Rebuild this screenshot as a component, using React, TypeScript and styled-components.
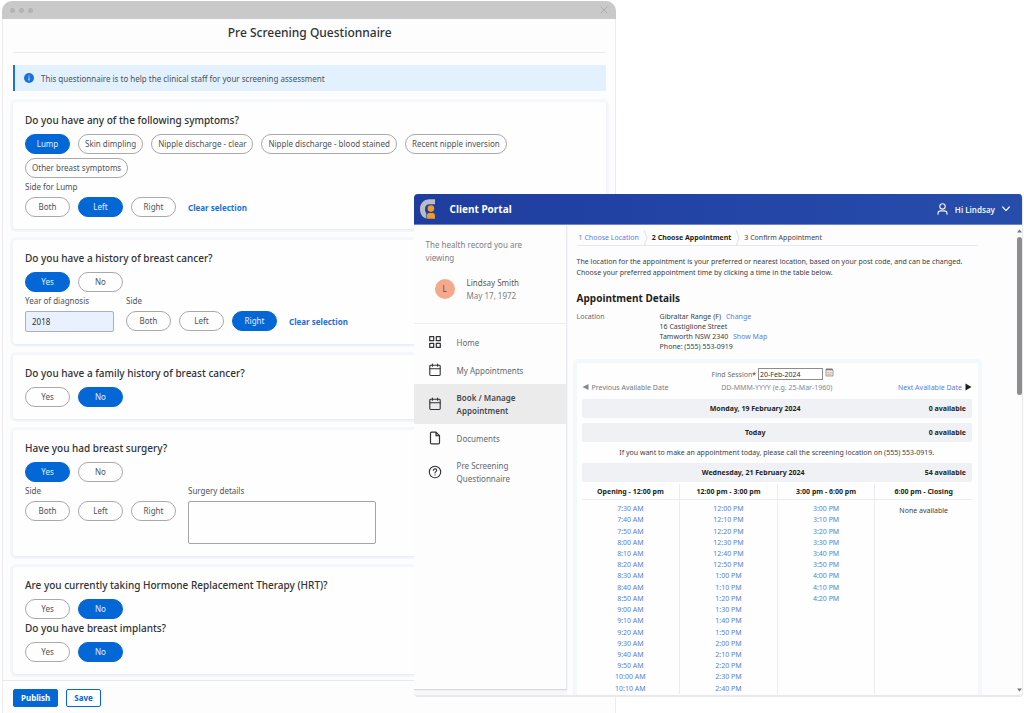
import React, { useState } from "react";
import styled, { createGlobalStyle } from "styled-components";

const GlobalStyle = createGlobalStyle`
  *, *::before, *::after { box-sizing: border-box; }
  body {
    margin: 0;
    background: #ffffff;
    font-family: "Noto Sans", "Open Sans", sans-serif;
    color: #3c4043;
  }
  button, input, textarea { font-family: inherit; margin: 0; }
  h1, h2, h3, p, ul, dl, dd { margin: 0; padding: 0; }
  a { color: #5a7fd6; text-decoration: none; }
`;

/* ---------- Desktop and windows ---------- */

const Desktop = styled.div`
  position: relative;
  min-height: 100vh;
  display: flex;
`;

const FormWindow = styled.section`
  width: 60%;
  margin: 1px 0 0 2px;
  display: flex;
  flex-direction: column;
  background: #fdfdfd;
  border: solid #ececec;
  border-width: 0 1px;
  border-radius: 10px 10px 0 0;
`;

const TitleBar = styled.div`
  height: 18px;
  margin: 0 -1px;
  padding: 0 8px;
  display: flex;
  align-items: center;
  gap: 4px;
  background: #c9c9c9;
  border-radius: 10px 10px 0 0;
`;

const Dot = styled.span`
  width: 5px;
  height: 5px;
  border-radius: 50%;
  background: #b3b3b3;
`;

const CloseButton = styled.button`
  margin-left: auto;
  padding: 0;
  border: 0;
  background: none;
  display: flex;
`;

const FormBody = styled.div`
  flex: 1;
  padding: 0 9px 6px 10px;
`;

const FormTitle = styled.h1`
  height: 34px;
  line-height: 27px;
  border-bottom: 1px solid #ebebee;
  font-size: 12px;
  font-weight: 500;
  text-align: center;
  color: #303236;
`;

const Notice = styled.p`
  margin: 12px 0 11px;
  height: 26px;
  padding-left: 9px;
  display: flex;
  align-items: center;
  gap: 7px;
  border-left: 2px solid #1a73d9;
  background: #e3f1ff;
  font-size: 8px;
  color: #4b5158;
`;

const CardList = styled.div`
  display: flex;
  flex-direction: column;
  gap: 11px;
`;

const Card = styled.section`
  padding: 10px 12px 12px;
  border-radius: 3px;
  background: #fefefe;
  box-shadow: 0 1px 2px #e6e9f0, 0 0 0 3px #f4f8fd;
`;

const Question = styled.h2`
  margin-bottom: 6px;
  line-height: 16px;
  font-size: 10px;
  font-weight: 500;
  color: #303236;

  div + & { margin-top: 1px; }
`;

const PillRow = styled.div`
  display: flex;
  flex-wrap: wrap;
  gap: 4px 8px;
`;

const Pill = styled.button<{ $on?: boolean }>`
  min-width: 45px;
  height: 20px;
  padding: 0 6px;
  border: 1px solid ${(p) => (p.$on ? "#0467d6" : "#a9a9a9")};
  border-radius: 10px;
  background: ${(p) => (p.$on ? "#0467d6" : "#fefefe")};
  color: ${(p) => (p.$on ? "#e2efff" : "#4f5357")};
  font-size: 8px;
  line-height: 12px;
`;

const ClearButton = styled.button`
  margin-left: 4px;
  padding: 0;
  border: 0;
  background: none;
  color: #1a70da;
  font-size: 8px;
  font-weight: 700;
`;

const FieldRow = styled.div`
  display: flex;
  gap: 12px;
  padding-top: 2px;
`;

const Field = styled.div`
  display: flex;
  flex-direction: column;
  gap: 3px;
`;

const FieldLabel = styled.label`
  line-height: 14px;
  font-size: 8px;
  color: #4f5357;
`;

const YearInput = styled.input`
  width: 89px;
  height: 21px;
  padding: 0 6px;
  border: 1px solid #a9b0ba;
  border-radius: 2px;
  background: #e9f1fe;
  font-size: 8px;
  color: #303236;
`;

const DetailsBox = styled.textarea`
  display: block;
  width: 188px;
  height: 43px;
  border: 1px solid #a4a4a4;
  border-radius: 2px;
  background: #fefefe;
  font-size: 8px;
  resize: none;
`;

const FormFooter = styled.footer`
  padding: 8px 10px 6px;
  display: flex;
  gap: 8px;
  border-top: 1px solid #e6e9f2;
`;

const ActionButton = styled.button<{ $primary?: boolean }>`
  height: 18px;
  padding: 0 7px;
  border: 1px solid #0467d6;
  border-radius: 2px;
  background: ${(p) => (p.$primary ? "#0467d6" : "#fefefe")};
  color: ${(p) => (p.$primary ? "#ffffff" : "#0467d6")};
  font-size: 8px;
  font-weight: 700;
  line-height: 12px;
`;

/* ---------- Client portal ---------- */

const PortalWindow = styled.section`
  position: absolute;
  top: 194px;
  right: 1px;
  bottom: 16px;
  left: calc(40% + 4px);
  display: flex;
  flex-direction: column;
  overflow: hidden;
  border: solid #e9e9ec;
  border-width: 0 1px 2px 0;
  border-radius: 4px;
  background: #fdfdfd;
`;

const PortalHeader = styled.header`
  flex: none;
  height: 31px;
  padding: 0 12px 0 6px;
  display: flex;
  align-items: center;
  background: linear-gradient(90deg, #1f3d9f, #274dab);
  border-bottom: 1px solid #6f86c6;
`;

const PortalName = styled.h2`
  margin-left: 15px;
  font-size: 10px;
  font-weight: 700;
  color: #ffffff;
`;

const UserMenu = styled.button`
  margin-left: auto;
  padding: 0;
  display: flex;
  align-items: center;
  gap: 7px;
  border: 0;
  background: none;
  color: #f1f4fc;
  font-size: 8px;
  font-weight: 600;
`;

const PortalBody = styled.div`
  flex: 1;
  min-height: 0;
  display: flex;
`;

const SideColumn = styled.div`
  flex: none;
  width: 153px;
  padding-bottom: 6px;
  background: #f7f7f8;
`;

const Sidebar = styled.aside`
  height: 100%;
  border-right: 1px solid #e6e9f2;
  background: #fdfdfd;
  box-shadow: 0 1px 1px #d5d8dc;
`;

const Profile = styled.div`
  height: 99px;
  padding: 13px 28px 0 12px;
  border-bottom: 1px solid #eceef3;
  font-size: 8px;
  line-height: 13px;
  color: #7b7f85;
`;

const Person = styled.div`
  margin-top: 12px;
  padding-left: 9px;
  display: flex;
  align-items: center;
  gap: 12px;
`;

const Avatar = styled.span`
  width: 20px;
  height: 20px;
  border-radius: 50%;
  background: #f6a88d;
  color: #5d4a44;
  font-size: 8px;
  line-height: 20px;
  text-align: center;
`;

const PersonName = styled.p`
  color: #55595e;
`;

const Nav = styled.nav`
  padding-top: 4px;
`;

const NavLink = styled.a<{ $active?: boolean }>`
  min-height: 28px;
  padding: 7px 10px 7px 14px;
  display: flex;
  align-items: center;
  gap: 15px;
  background: ${(p) => (p.$active ? "#ebebeb" : "transparent")};
  color: ${(p) => (p.$active ? "#45484c" : "#65696e")};
  font-size: 8px;
  font-weight: ${(p) => (p.$active ? 600 : 400)};
  line-height: 13px;

  svg { flex: none; color: #303236; }
`;

const Main = styled.main`
  flex: 1;
  min-width: 0;
  padding: 5px 36px 0 10px;
  display: flex;
  flex-direction: column;
  font-size: 7px;
  color: #3c4043;
`;

const Steps = styled.nav`
  height: 16px;
  display: flex;
  align-items: center;
  gap: 4px;
  padding-left: 2px;
  border-bottom: 1px solid #e6e9f2;
`;

const StepLink = styled.a<{ $current?: boolean }>`
  color: ${(p) => (p.$current ? "#1d1f22" : "#5a7fd6")};
  font-weight: ${(p) => (p.$current ? 700 : 400)};
`;

const Intro = styled.p`
  margin-top: 10px;
  line-height: 11px;
`;

const DetailsTitle = styled.h3`
  margin: 12px 0 6px;
  font-size: 10px;
  line-height: 16px;
  color: #1d1f22;
`;

const Details = styled.dl`
  display: flex;
  line-height: 10px;

  dt { width: 83px; color: #65696e; }
  a { margin-left: 3px; }
`;

const Sessions = styled.section`
  flex: 1;
  min-height: 0;
  margin-top: 11px;
  padding: 5px 6px 1px 5px;
  display: flex;
  flex-direction: column;
  border-radius: 2px;
  background: #fefefe;
  box-shadow: 0 0 0 4px #f3f8fd;
`;

const FinderRow = styled.div`
  padding-right: 8px;
  display: flex;
  justify-content: center;
  align-items: center;
  gap: 2px;
  color: #6a6e73;

  b { color: #a0522d; }
`;

const DateInput = styled.input`
  width: 65px;
  height: 12px;
  padding: 0 1px;
  border: 1px solid #8c8c8c;
  border-radius: 0;
  background: #ffffff;
  color: #303236;
  font-size: 7px;
`;

const CalendarButton = styled.button`
  align-self: flex-start;
  padding: 0;
  border: 0;
  background: none;
  display: flex;
`;

const PagerRow = styled.div`
  height: 14px;
  margin-bottom: 5px;
  display: grid;
  grid-template-columns: 1fr auto 1fr;
  align-items: center;
  color: #85898e;
`;

const PagerButton = styled.button<{ $link?: boolean }>`
  justify-self: ${(p) => (p.$link ? "end" : "start")};
  padding: 0;
  display: flex;
  align-items: center;
  gap: 3px;
  border: 0;
  background: none;
  color: ${(p) => (p.$link ? "#5a7fd6" : "#75797e")};
  font-size: 7px;
`;

const DayBar = styled.div`
  flex: none;
  height: 19px;
  margin-bottom: 5px;
  padding-right: 6px;
  display: flex;
  align-items: center;
  border-radius: 2px;
  background: #f0f1f4;
  color: #1d1f22;
  font-weight: 700;

  span:first-child { flex: 1; text-align: center; }
`;

const DayNote = styled.p`
  margin-bottom: 5px;
  line-height: 11px;
  text-align: center;
`;

const TimesArea = styled.div`
  flex: 1;
  min-height: 0;
  margin-top: -3px;
`;

const TimesTable = styled.table`
  width: 100%;
  height: 100%;
  table-layout: fixed;
  border-collapse: separate;
  border-spacing: 0;
  text-align: center;

  th, td { padding: 0; line-height: 11px; font-size: 7px; }
  th { height: 16px; border-bottom: 1px solid #e9ebf2; color: #1d1f22; }
  th + th, td + td { border-left: 1px solid #ececee; }
  tbody tr:first-child td { padding-top: 3px; }
  td[rowspan] { vertical-align: top; }
  tbody tr:first-child td[rowspan] { padding-top: 5px; }
  a { display: block; }
`;

const ScrollBar = styled.div`
  width: 8px;
  padding: 2px 0 1px 2px;
  display: flex;
  flex-direction: column;
  align-items: center;
  justify-content: space-between;
`;

const ScrollTop = styled.div`
  display: flex;
  flex-direction: column;
  align-items: center;
  gap: 2px;
`;

const Thumb = styled.div`
  width: 5px;
  height: 158px;
  border-radius: 3px;
  background: #8d8d8f;
`;

const MainArea = styled.div`
  flex: 1;
  min-width: 0;
  display: flex;
`;

/* ---------- Icons ---------- */

const stroke = { fill: "none", stroke: "currentColor", strokeLinecap: "round", strokeLinejoin: "round" } as const;

const InfoIcon = () => (
  <svg width="10" height="10" viewBox="0 0 10 10" aria-hidden="true">
    <circle cx="5" cy="5" r="5" fill="#1a73d9" />
    <path d="M5 4.4v3M5 2.4v1" stroke="#d9ebff" strokeWidth="1.1" />
  </svg>
);

const CloseIcon = () => (
  <svg width="8" height="8" viewBox="0 0 8 8" aria-hidden="true">
    <path d="M.5.5l7 7M7.5.5l-7 7" stroke="#a9a9a9" strokeWidth="0.9" />
  </svg>
);

const LogoIcon = () => (
  <svg width="15" height="20" viewBox="0 0 15 20" aria-hidden="true">
    <path d="M15 0.300H9.500C4 0.300 0 4.300 0 10c0 4.900 2.500 8.600 6.200 9.600v-5.600C5.400 13 5 11.600 5 10c0-3 1.700-4.700 4.500-4.700H15z" fill="#b9bcc2" />
    <circle cx="10.900" cy="9.600" r="3.300" fill="#f09a28" />
    <path d="M6.800 19.700v-3c0-1.600.9-2.600 2.400-2.600h3.400c1.500 0 2.400 1 2.400 2.600v3z" fill="#f09a28" />
  </svg>
);

const UserIcon = () => (
  <svg width="11" height="12" viewBox="0 0 11 12" aria-hidden="true" {...stroke} strokeWidth="1.1">
    <circle cx="5.500" cy="3.400" r="2.700" />
    <path d="M1 11.200V10.400C1 8.700 2.200 7.900 3.800 7.900h3.400c1.600 0 2.800.8 2.800 2.500v.8" />
  </svg>
);

const ChevronIcon = () => (
  <svg width="8" height="6" viewBox="0 0 8 6" aria-hidden="true" {...stroke} strokeWidth="1.200">
    <path d="M.7 1l3.300 3.600L7.300 1" />
  </svg>
);

const GridIcon = () => (
  <svg width="14" height="14" viewBox="0 0 14 14" aria-hidden="true" {...stroke} strokeWidth="1.200">
    <path d="M1.700 1.700h4v4h-4zM8.300 1.700h4v4h-4zM1.700 8.300h4v4h-4zM8.300 8.300h4v4h-4z" />
  </svg>
);

const CalendarIcon = () => (
  <svg width="14" height="14" viewBox="0 0 14 14" aria-hidden="true" {...stroke} strokeWidth="1.100">
    <rect x="1.800" y="2.300" width="10.400" height="10.200" rx="0.900" />
    <path d="M1.800 5.700h10.400M4.400 1v2.300M9.600 1v2.300" />
  </svg>
);

const FileIcon = () => (
  <svg width="14" height="14" viewBox="0 0 14 14" aria-hidden="true" {...stroke} strokeWidth="1.200">
    <path d="M8 1.200H3.600c-.6 0-1.100.5-1.100 1.100v9.400c0 .6.500 1.100 1.100 1.100h6.800c.6 0 1.100-.5 1.100-1.100V4.700zM8 1.200v3.500h3.500" />
  </svg>
);

const HelpIcon = () => (
  <svg width="14" height="14" viewBox="0 0 14 14" aria-hidden="true" {...stroke} strokeWidth="1.100">
    <circle cx="7" cy="7" r="5.700" />
    <path d="M5.300 5.500c.1-1 .8-1.600 1.700-1.600s1.700.6 1.700 1.500c0 1.200-1.700 1.300-1.700 2.500M7 9.900v.1" />
  </svg>
);

const StepDivider = () => (
  <svg width="5" height="16" viewBox="0 0 5 16" aria-hidden="true">
    <path d="M1 0l3 8-3 8" fill="none" stroke="#dde1ec" />
  </svg>
);

const Triangle = ({ d, color }: { d: string; color: string }) => (
  <svg width="7" height="8" viewBox="0 0 7 8" aria-hidden="true">
    <path d={d} fill={color} />
  </svg>
);

const DatePickIcon = () => (
  <svg width="9" height="9" viewBox="0 0 9 9" aria-hidden="true">
    <path d="M1 1h6l1 1v6H1z" fill="#efe9e4" stroke="#8b8b8e" strokeWidth="0.800" />
    <path d="M1 1.500h7" stroke="#77777b" strokeWidth="1.400" />
    <path d="M2.500 4.500h1.500M5 4.500h1.500M2.500 6.300h4" stroke="#dfa88e" />
  </svg>
);

/* ---------- Form parts ---------- */

function Choice({ options, initial, label, clear }: { options: string[]; initial?: string; label: string; clear?: boolean }) {
  const [value, setValue] = useState(initial);
  return (
    <PillRow role="group" aria-label={label}>
      {options.map((o) => (
        <Pill key={o} type="button" $on={o === value} aria-pressed={o === value} onClick={() => setValue(o)}>
          {o}
        </Pill>
      ))}
      {clear && (
        <ClearButton type="button" onClick={() => setValue(undefined)}>
          Clear selection
        </ClearButton>
      )}
    </PillRow>
  );
}

const SYMPTOMS = [
  "Lump",
  "Skin dimpling",
  "Nipple discharge - clear",
  "Nipple discharge - blood stained",
  "Recent nipple inversion",
  "Other breast symptoms",
];
const YES_NO = ["Yes", "No"];
const SIDES = ["Both", "Left", "Right"];

const clock = (minutes: number) => {
  const h = Math.floor(minutes / 60);
  const m = String(minutes % 60).padStart(2, "0");
  return `${h % 12 || 12}:${m} ${h < 12 ? "AM" : "PM"}`;
};
const slots = (start: number, count: number) => Array.from({ length: count }, (_, i) => clock(start + i * 10));
const MORNING = slots(450, 17);
const MIDDAY = slots(720, 17);
const AFTERNOON = slots(900, 9);

const NAV = [
  { text: "Home", Icon: GridIcon },
  { text: "My Appointments", Icon: CalendarIcon },
  { text: "Book / Manage Appointment", Icon: CalendarIcon, active: true },
  { text: "Documents", Icon: FileIcon },
  { text: "Pre Screening Questionnaire", Icon: HelpIcon },
];

function Questionnaire() {
  return (
    <FormWindow>
      <TitleBar>
        <Dot />
        <Dot />
        <Dot />
        <CloseButton type="button" aria-label="Close">
          <CloseIcon />
        </CloseButton>
      </TitleBar>
      <FormBody>
        <FormTitle>Pre Screening Questionnaire</FormTitle>
        <Notice>
          <InfoIcon />
          This questionnaire is to help the clinical staff for your screening assessment
        </Notice>
        <CardList>
          <Card>
            <Question>Do you have any of the following symptoms?</Question>
            <Choice label="Symptoms" options={SYMPTOMS} initial="Lump" />
            <FieldRow>
              <Field>
                <FieldLabel as="span">Side for Lump</FieldLabel>
                <Choice label="Side for Lump" options={SIDES} initial="Left" clear />
              </Field>
            </FieldRow>
          </Card>
          <Card>
            <Question>Do you have a history of breast cancer?</Question>
            <Choice label="History of breast cancer" options={YES_NO} initial="Yes" />
            <FieldRow>
              <Field>
                <FieldLabel htmlFor="year">Year of diagnosis</FieldLabel>
                <YearInput id="year" defaultValue="2018" />
              </Field>
              <Field>
                <FieldLabel as="span">Side</FieldLabel>
                <Choice label="Side of breast cancer" options={SIDES} initial="Right" clear />
              </Field>
            </FieldRow>
          </Card>
          <Card>
            <Question>Do you have a family history of breast cancer?</Question>
            <Choice label="Family history" options={YES_NO} initial="No" />
          </Card>
          <Card>
            <Question>Have you had breast surgery?</Question>
            <Choice label="Breast surgery" options={YES_NO} initial="Yes" />
            <FieldRow>
              <Field>
                <FieldLabel as="span">Side</FieldLabel>
                <Choice label="Side of surgery" options={SIDES} />
              </Field>
              <Field>
                <FieldLabel htmlFor="surgery">Surgery details</FieldLabel>
                <DetailsBox id="surgery" />
              </Field>
            </FieldRow>
          </Card>
          <Card>
            <Question>Are you currently taking Hormone Replacement Therapy (HRT)?</Question>
            <Choice label="Hormone Replacement Therapy" options={YES_NO} initial="No" />
            <Question>Do you have breast implants?</Question>
            <Choice label="Breast implants" options={YES_NO} initial="No" />
          </Card>
        </CardList>
      </FormBody>
      <FormFooter>
        <ActionButton type="button" $primary>
          Publish
        </ActionButton>
        <ActionButton type="button">Save</ActionButton>
      </FormFooter>
    </FormWindow>
  );
}

function Portal() {
  return (
    <PortalWindow>
      <PortalHeader>
        <LogoIcon />
        <PortalName>Client Portal</PortalName>
        <UserMenu type="button">
          <UserIcon />
          Hi Lindsay
          <ChevronIcon />
        </UserMenu>
      </PortalHeader>
      <PortalBody>
        <SideColumn>
          <Sidebar>
            <Profile>
              <p>The health record you are viewing</p>
              <Person>
                <Avatar>L</Avatar>
                <div>
                  <PersonName>Lindsay Smith</PersonName>
                  <p>May 17, 1972</p>
                </div>
              </Person>
            </Profile>
            <Nav>
              {NAV.map(({ text, Icon, active }) => (
                <NavLink key={text} href="#" $active={active}>
                  <Icon />
                  {text}
                </NavLink>
              ))}
            </Nav>
          </Sidebar>
        </SideColumn>
        <MainArea>
          <Main>
            <Steps>
              <StepLink href="#">1 Choose Location</StepLink>
              <StepDivider />
              <StepLink href="#" $current>
                2 Choose Appointment
              </StepLink>
              <StepDivider />
              <span>3 Confirm Appointment</span>
            </Steps>
            <Intro>
              The location for the appointment is your preferred or nearest location, based on your post code, and can be
              changed. Choose your preferred appointment time by clicking a time in the table below.
            </Intro>
            <DetailsTitle>Appointment Details</DetailsTitle>
            <Details>
              <dt>Location</dt>
              <dd>
                Gibraltar Range (F) <a href="#">Change</a>
                <br />
                16 Castiglione Street
                <br />
                Tamworth NSW 2340 <a href="#">Show Map</a>
                <br />
                Phone: (555) 553-0919
              </dd>
            </Details>
            <Sessions>
              <FinderRow>
                <label htmlFor="session">
                  Find Session<b>*</b>
                </label>
                <DateInput id="session" defaultValue="20-Feb-2024" />
                <CalendarButton type="button" aria-label="Pick a date">
                  <DatePickIcon />
                </CalendarButton>
              </FinderRow>
              <PagerRow>
                <PagerButton type="button">
                  <Triangle d="M6.500 1v6L0.500 4z" color="#85898e" />
                  Previous Available Date
                </PagerButton>
                <span>DD-MMM-YYYY (e.g. 25-Mar-1960)</span>
                <PagerButton type="button" $link>
                  Next Available Date
                  <Triangle d="M0.500 0.500v7l6-3.500z" color="#1d1f22" />
                </PagerButton>
              </PagerRow>
              <DayBar>
                <span>Monday, 19 February 2024</span>
                <span>0 available</span>
              </DayBar>
              <DayBar>
                <span>Today</span>
                <span>0 available</span>
              </DayBar>
              <DayNote>If you want to make an appointment today, please call the screening location on (555) 553-0919.</DayNote>
              <DayBar>
                <span>Wednesday, 21 February 2024</span>
                <span>54 available</span>
              </DayBar>
              <TimesArea>
                <TimesTable>
                  <thead>
                    <tr>
                      <th>Opening - 12:00 pm</th>
                      <th>12:00 pm - 3:00 pm</th>
                      <th>3:00 pm - 6:00 pm</th>
                      <th>6:00 pm - Closing</th>
                    </tr>
                  </thead>
                  <tbody>
                    {MORNING.map((t, i) => (
                      <tr key={t}>
                        <td>
                          <a href="#">{t}</a>
                        </td>
                        <td>
                          <a href="#">{MIDDAY[i]}</a>
                        </td>
                        <td>{AFTERNOON[i] && <a href="#">{AFTERNOON[i]}</a>}</td>
                        {i === 0 && <td rowSpan={MORNING.length}>None available</td>}
                      </tr>
                    ))}
                  </tbody>
                </TimesTable>
              </TimesArea>
            </Sessions>
          </Main>
          <ScrollBar>
            <ScrollTop>
              <Triangle d="M1 5.500h5L3.500 2.500z" color="#77777a" />
              <Thumb />
            </ScrollTop>
            <Triangle d="M1 2.500h5L3.500 5.500z" color="#77777a" />
          </ScrollBar>
        </MainArea>
      </PortalBody>
    </PortalWindow>
  );
}

export default function App() {
  return (
    <>
      <GlobalStyle />
      <Desktop>
        <Questionnaire />
        <Portal />
      </Desktop>
    </>
  );
}
